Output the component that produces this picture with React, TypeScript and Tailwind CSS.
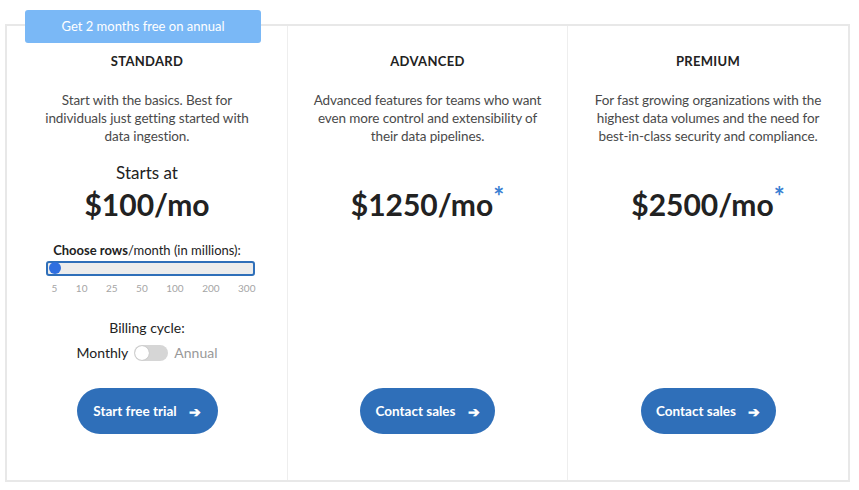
import React from "react";

const plans = [
  {
    name: "ADVANCED",
    desc: ["Advanced features for teams who want", "even more control and extensibility of", "their data pipelines."],
    price: "$1250/mo",
  },
  {
    name: "PREMIUM",
    desc: ["For fast growing organizations with the", "highest data volumes and the need for", "best-in-class security and compliance."],
    price: "$2500/mo",
  },
];

const ticks = ["5", "10", "25", "50", "100", "200", "300"];

function CtaButton({ label, width }: { label: string; width: string }) {
  return (
    <button
      className={`mx-auto flex h-[46px] items-center justify-center gap-3 rounded-full bg-[#2f6fb9] text-[13.5px] font-bold text-white ${width}`}
    >
      {label}
      <span className="text-[14px]">➔</span>
    </button>
  );
}

export default function App() {
  return (
    <div
      className="relative h-[490px] w-[859px] bg-white pl-[5px] pt-[24px] text-[#333]"
      style={{ fontFamily: "Lato, 'Open Sans', sans-serif" }}
    >
      {/* badge */}
      <div className="absolute left-[25px] top-[10px] flex h-[33px] w-[236px] items-center justify-center rounded-[3px] bg-[#7ab8f6] text-[13px] text-white">
        Get 2 months free on annual
      </div>

      <div className="flex h-[458px] w-[845px] border-2 border-[#e8e8e8]">
        {/* Standard */}
        <div className="flex w-[281px] flex-col items-center border-r border-[#eeeeee] pt-[26px] pb-[46px] text-center">
          <div className="text-[13px] font-bold tracking-wide text-[#222]">STANDARD</div>
          <div className="mt-[19px] text-[13.5px] leading-[18px] tracking-[-0.1px] text-[#4a4a4a]">
            <div>Start with the basics. Best for</div>
            <div>individuals just getting started with</div>
            <div>data ingestion.</div>
          </div>
          <div className="mt-[17px] text-[17px] leading-[22px] text-[#222]">Starts at</div>
          <div className="mt-[1px] text-[30px] font-bold leading-[38px] text-[#222]">$100/mo</div>
          <div className="mt-[18px] text-[13px] leading-[18px] text-[#222]">
            <span className="font-bold">Choose rows</span>/month (in millions):
          </div>
          <div className="ml-[7px] mt-[2px] flex h-[15px] w-[209px] items-center rounded-[3px] border-2 border-[#2f6fb9] bg-[#ececec] px-[1px]">
            <div className="h-[12px] w-[12px] rounded-full bg-[#2f6fe0]" />
          </div>
          <div className="ml-[13px] mt-[5px] flex w-[204px] justify-between text-[10px] text-[#a5a5a5]">
            {ticks.map((t) => (
              <span key={t}>{t}</span>
            ))}
          </div>
          <div className="mt-[23px] text-[14px] leading-[18px] text-[#222]">Billing cycle:</div>
          <div className="mt-[7px] flex items-center gap-[6px] text-[14px] leading-[18px]">
            <span className="text-[#222]">Monthly</span>
            <div className="flex h-[16px] w-[34px] items-center rounded-full bg-[#d6d6d6] px-[1px]">
              <div className="h-[14px] w-[14px] rounded-full bg-white shadow-[0_0_1px_rgba(0,0,0,0.3)]" />
            </div>
            <span className="text-[#999]">Annual</span>
          </div>
          <div className="mt-auto">
            <CtaButton label="Start free trial" width="w-[141px]" />
          </div>
        </div>

        {plans.map((p, i) => (
          <div
            key={p.name}
            className={`flex w-[280px] flex-col items-center pt-[26px] pb-[46px] text-center ${i === 0 ? "border-r border-[#eeeeee]" : ""}`}
          >
            <div className="text-[13px] font-bold tracking-wide text-[#222]">{p.name}</div>
            <div className="mt-[19px] text-[13.5px] leading-[18px] tracking-[-0.1px] text-[#4a4a4a]">
              {p.desc.map((d) => (
                <div key={d}>{d}</div>
              ))}
            </div>
            <div className="mt-[40px] flex items-start text-[30px] font-bold leading-[38px] text-[#222]">
              {p.price}
              <span className="-mt-[8px] text-[26px] font-bold text-[#3a80d2]">*</span>
            </div>
            <div className="mt-auto">
              <CtaButton label="Contact sales" width="w-[135px]" />
            </div>
          </div>
        ))}
      </div>
    </div>
  );
}
